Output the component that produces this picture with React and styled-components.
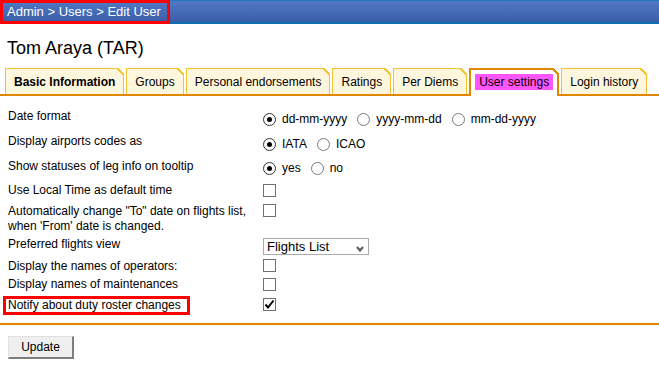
import React from "react"
import styled, { createGlobalStyle } from "styled-components"

const GlobalStyle = createGlobalStyle`
  body {
    margin: 0;
    background: #fff;
    color: #000;
    font-family: "Liberation Sans", Arial, sans-serif;
    font-size: 12px;
  }
`

const ORANGE = "#e08600"

const Header = styled.div`
  height: 24px;
  display: flex;
  background: linear-gradient(
    to bottom,
    #1f77bd 0,
    #1f77bd 1px,
    #5079c6 1px,
    #3b5da7 22px,
    #0c6db2 22px,
    #0c6db2 24px
  );
`

const Crumbs = styled.div`
  box-sizing: border-box;
  height: 24px;
  border: 3px solid #f00;
  padding: 0 6px 0 4px;
  color: #fff;
  font-size: 13px;
  line-height: 18px;
  white-space: nowrap;
`

const Title = styled.h1`
  margin: 13px 0 0 7px;
  font-size: 18px;
  line-height: 22px;
  font-weight: normal;
`

const TabBar = styled.div`
  display: flex;
  align-items: flex-end;
  gap: 2px;
  height: 26px;
  margin-top: 9px;
  padding-left: 5px;
  border-bottom: 2px solid ${ORANGE};
`

const Tab = styled.div`
  position: relative;
  box-sizing: border-box;
  height: ${p => (p.$active ? 28 : 26)}px;
  margin-bottom: ${p => (p.$active ? -2 : 0)}px;
  padding: ${p => (p.$active ? "4px 4px 0" : "6px 8px 0")};
  border: ${p => (p.$active ? `2px solid ${ORANGE}` : "1px solid #f4c430")};
  border-bottom: none;
  background: ${p => (p.$active ? "#fff" : "#fff7dd")};
  font-weight: ${p => (p.$bold ? "bold" : "normal")};
  line-height: 14px;
  white-space: nowrap;

  &::after {
    content: "";
    position: absolute;
    top: ${p => (p.$active ? -2 : -1)}px;
    right: ${p => (p.$active ? -2 : -1)}px;
    width: 7px;
    height: 7px;
    background: linear-gradient(
      to top right,
      transparent calc(50% - 0.8px),
      ${p => (p.$active ? ORANGE : "#f4c430")} calc(50% - 0.8px),
      ${p => (p.$active ? ORANGE : "#f4c430")} calc(50% + 0.8px),
      #fff calc(50% + 0.8px)
    );
  }
`

const Marked = styled.span`
  display: inline-block;
  padding: 1px 4px;
  background: #ff55ff;
`

const Form = styled.div`
  padding: 13px 0 6px;
  border-bottom: 2px solid ${ORANGE};
`

const Row = styled.div`
  display: grid;
  grid-template-columns: 263px 1fr;
  height: ${p => p.$h}px;
`

const Label = styled.div`
  padding: 0 8px;
  line-height: 15px;
`

const Boxed = styled.span`
  display: inline-block;
  margin: -1px 0 0 -5px;
  padding: 0 6px 0 2px;
  border: 3px solid #f00;
  line-height: 13px;
`

const Control = styled.div`
  display: flex;
  align-items: flex-start;
  padding-top: ${p => p.$pad}px;
`

const Options = styled.div`
  display: flex;
  gap: 10px;
`

const Option = styled.label`
  display: inline-flex;
  align-items: center;
  gap: 6px;
  line-height: 14px;
`

const RadioMark = styled.span`
  box-sizing: border-box;
  width: 13px;
  height: 13px;
  border-radius: 50%;
  border: 1px solid ${p => (p.$on ? "#333" : "#7a7a7a")};
  background: #fff;
  display: inline-flex;
  align-items: center;
  justify-content: center;

  &::after {
    content: "";
    display: ${p => (p.$on ? "block" : "none")};
    width: 5px;
    height: 5px;
    border-radius: 50%;
    background: #000;
  }
`

const CheckMark = styled.span`
  box-sizing: border-box;
  width: 13px;
  height: 13px;
  border: 1px solid #707070;
  background: #fff;
  display: inline-flex;
  align-items: center;
  justify-content: center;
`

const Select = styled.div`
  box-sizing: border-box;
  width: 106px;
  height: 17px;
  border: 1px solid #a9a9a9;
  padding: 0 4px 0 3px;
  display: flex;
  justify-content: space-between;
  font-size: 13px;
  line-height: 15px;

  svg {
    align-self: flex-end;
    margin-bottom: 2px;
  }
`

const UpdateButton = styled.button`
  display: block;
  box-sizing: border-box;
  width: 66px;
  height: 23px;
  margin: 11px 0 0 8px;
  padding: 0;
  border-style: solid;
  border-width: 1px 2px 2px 1px;
  border-color: #e0e0e0 #7d7d7d #7d7d7d #e0e0e0;
  background: #efefef;
  color: #000;
  font-family: inherit;
  font-size: 12px;
  line-height: 14px;
`

function Radio({ on, children }) {
  return (
    <Option>
      <RadioMark $on={on} />
      {children}
    </Option>
  )
}

function Checkbox({ on }) {
  return (
    <CheckMark>
      {on && (
        <svg width="11" height="11" viewBox="0 0 11 11">
          <path d="M1.5 5.5 L4 8.5 L9.5 1.5" fill="none" stroke="#000" strokeWidth="2" />
        </svg>
      )}
    </CheckMark>
  )
}

const tabs = [
  { name: "Basic Information", bold: true },
  { name: "Groups" },
  { name: "Personal endorsements" },
  { name: "Ratings" },
  { name: "Per Diems" },
  { name: "User settings", active: true },
  { name: "Login history" },
]

export default function App() {
  return (
    <>
      <GlobalStyle />
      <Header>
        <Crumbs>Admin &gt; Users &gt; Edit User</Crumbs>
      </Header>
      <Title>Tom Araya (TAR)</Title>
      <TabBar>
        {tabs.map(t => (
          <Tab key={t.name} $active={t.active} $bold={t.bold}>
            {t.active ? <Marked>{t.name}</Marked> : t.name}
          </Tab>
        ))}
      </TabBar>
      <Form>
        <Row $h={25}>
          <Label>Date format</Label>
          <Control $pad={3}>
            <Options>
              <Radio on>dd-mm-yyyy</Radio>
              <Radio>yyyy-mm-dd</Radio>
              <Radio>mm-dd-yyyy</Radio>
            </Options>
          </Control>
        </Row>
        <Row $h={25}>
          <Label>Display airports codes as</Label>
          <Control $pad={3}>
            <Options>
              <Radio on>IATA</Radio>
              <Radio>ICAO</Radio>
            </Options>
          </Control>
        </Row>
        <Row $h={24}>
          <Label>Show statuses of leg info on tooltip</Label>
          <Control $pad={2}>
            <Options>
              <Radio on>yes</Radio>
              <Radio>no</Radio>
            </Options>
          </Control>
        </Row>
        <Row $h={21}>
          <Label>Use Local Time as default time</Label>
          <Control $pad={1}>
            <Checkbox />
          </Control>
        </Row>
        <Row $h={33}>
          <Label>Automatically change "To" date on flights list, when 'From' date is changed.</Label>
          <Control $pad={0}>
            <Checkbox />
          </Control>
        </Row>
        <Row $h={22}>
          <Label>Preferred flights view</Label>
          <Control $pad={1}>
            <Select>
              Flights List
              <svg width="8" height="6" viewBox="0 0 8 6">
                <path d="M1 1 L4 4.5 L7 1" fill="none" stroke="#555" strokeWidth="2" />
              </svg>
            </Select>
          </Control>
        </Row>
        <Row $h={18}>
          <Label>Display the names of operators:</Label>
          <Control $pad={0}>
            <Checkbox />
          </Control>
        </Row>
        <Row $h={20}>
          <Label>Display names of maintenances</Label>
          <Control $pad={1}>
            <Checkbox />
          </Control>
        </Row>
        <Row $h={20}>
          <Label>
            <Boxed>Notify about duty roster changes</Boxed>
          </Label>
          <Control $pad={1}>
            <Checkbox on />
          </Control>
        </Row>
      </Form>
      <UpdateButton>Update</UpdateButton>
    </>
  )
}
